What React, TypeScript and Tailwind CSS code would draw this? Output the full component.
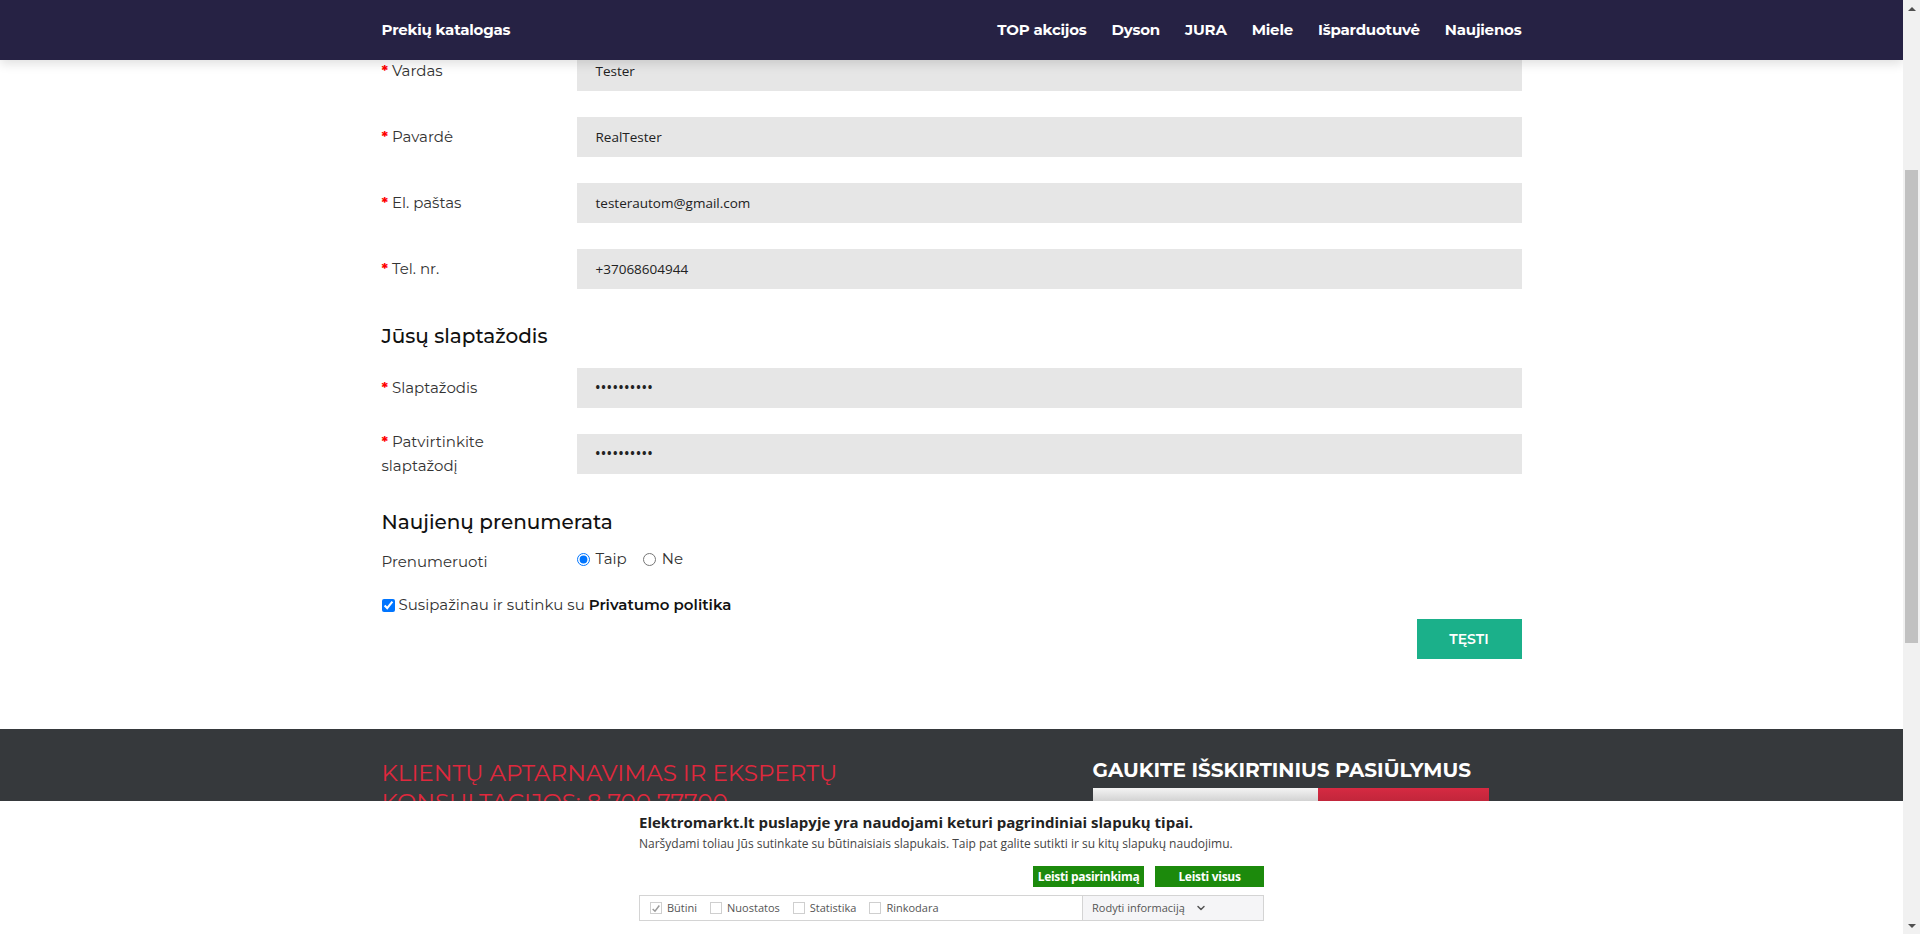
import { ChevronDown } from "lucide-react";

const personal = [
    { label: "Vardas", value: "Tester" },
    { label: "Pavardė", value: "RealTester" },
    { label: "El. paštas", value: "testerautom@gmail.com" },
    { label: "Tel. nr.", value: "+37068604944" },
];

const navLinks = ["TOP akcijos", "Dyson", "JURA", "Miele", "Išparduotuvė", "Naujienos"];

function Field({ label, value, password }: { label: React.ReactNode; value: string; password?: boolean }) {
    return (
        <div className="flex items-center h-[40px] mb-[26px]">
            <label className="w-[195px] shrink-0 text-[15px] leading-[24px] text-[#333]">
                <span className="text-[#f00] font-bold">*</span> {label}
            </label>
            <div className="flex-1 h-[40px] bg-[#e6e6e6] flex items-center pl-[19px] text-[13.5px] text-[#222] font-['Open_Sans',sans-serif]">
                {password ? (
                    <span className="text-[12px] font-bold tracking-[1.3px]">••••••••••</span>
                ) : (
                    value
                )}
            </div>
        </div>
    );
}

function CookieBox({ label, checked }: { label: string; checked?: boolean }) {
    return (
        <span className="flex items-center gap-[5px] mr-[13px]">
            <span className="w-[12px] h-[12px] border border-[#cfcfcf] bg-white flex items-center justify-center">
                {checked && (
                    <svg viewBox="0 0 12 12" className="w-[11px] h-[11px]">
                        <path d="M2 6.5 L4.8 9.2 L10 2.5" fill="none" stroke="#9a9a9a" strokeWidth="1.8" />
                    </svg>
                )}
            </span>
            <span>{label}</span>
        </span>
    );
}

export default function App() {
    return (
        <div className="flex h-screen overflow-hidden bg-white font-['Montserrat','Noto_Sans',sans-serif]">
            <div className="relative flex-1 overflow-hidden">
                {/* Sticky header */}
                <header className="absolute top-0 left-0 right-0 z-20 h-[60px] bg-[#262244] shadow-[0_4px_10px_rgba(0,0,0,0.12)]">
                    <div className="w-[1140px] mx-auto h-full flex items-center justify-between text-white font-bold text-[15px] tracking-[-0.2px]">
                        <span>Prekių katalogas</span>
                        <nav className="flex gap-[25px]">
                            {navLinks.map((l) => (
                                <span key={l}>{l}</span>
                            ))}
                        </nav>
                    </div>
                </header>

                {/* Registration form */}
                <main className="w-[1140px] mx-auto pt-[51px]">
                    {personal.map((f) => (
                        <Field key={f.label} label={f.label} value={f.value} />
                    ))}

                    <h3 className="mt-[35px] mb-[20px] text-[20px] leading-[24px] font-medium text-[#111]">Jūsų slaptažodis</h3>
                    <Field label="Slaptažodis" value="" password />
                    <Field
                        label={
                            <>
                                Patvirtinkite
                                <br />
                                slaptažodį
                            </>
                        }
                        value=""
                        password
                    />

                    <h3 className="mt-[36px] mb-[13px] text-[20px] leading-[24px] font-medium text-[#111]">Naujienų prenumerata</h3>
                    <div className="flex items-center h-[24px]">
                        <span className="w-[195px] text-[15px] text-[#333] pt-[6px]">Prenumeruoti</span>
                        <label className="flex items-center gap-[6px] text-[15px] text-[#333] mr-[16px]">
                            <input type="radio" name="sub" defaultChecked className="w-[13px] h-[13px] m-0 accent-[#0075ff]" />
                            Taip
                        </label>
                        <label className="flex items-center gap-[6px] text-[15px] text-[#333]">
                            <input type="radio" name="sub" className="w-[13px] h-[13px] m-0" />
                            Ne
                        </label>
                    </div>

                    <label className="flex items-center gap-[4px] mt-[22px] text-[15px] leading-[24px] text-[#333]">
                        <input type="checkbox" defaultChecked className="w-[13px] h-[13px] m-0 accent-[#0075ff]" />
                        Susipažinau ir sutinku su <b className="font-semibold text-[#111]">Privatumo politika</b>
                    </label>

                    <div className="flex justify-end mt-[2px]">
                        <button className="w-[105px] h-[40px] bg-[#1bb08a] text-white text-[14px] font-semibold">TĘSTI</button>
                    </div>
                </main>

                {/* Footer */}
                <footer className="mt-[70px] bg-[#36393c] h-[300px]">
                    <div className="w-[1140px] mx-auto pt-[30px] flex">
                        <div className="w-[711px] shrink-0">
                            <h2 className="text-[23px] leading-[29px] text-[#e0283d] uppercase">
                                Klientų aptarnavimas ir ekspertų
                                <br />
                                konsultacijos: 8 700 77700
                            </h2>
                        </div>
                        <div className="-mt-[2px]">
                            <h2 className="text-[20px] leading-[26px] font-bold text-white uppercase">Gaukite išskirtinius pasiūlymus</h2>
                            <div className="flex mt-[5px]">
                                <div className="w-[225px] h-[36px] bg-gradient-to-b from-[#f4f4f4] to-[#9a9a9a]" />
                                <div className="w-[171px] h-[36px] bg-gradient-to-b from-[#d62a42] to-[#9e1f2e]" />
                            </div>
                        </div>
                    </div>
                </footer>

                {/* Cookie consent */}
                <div className="absolute left-0 right-0 bottom-0 z-30 h-[133px] bg-white font-['Open_Sans',sans-serif]">
                    <div className="w-[625px] ml-[639px] pt-[11px]">
                        <p className="text-[15px] leading-[20px] font-bold text-[#222]">
                            Elektromarkt.lt puslapyje yra naudojami keturi pagrindiniai slapukų tipai.
                        </p>
                        <p className="mt-[3px] text-[12px] leading-[17px] text-[#444]">
                            Naršydami toliau Jūs sutinkate su būtinaisiais slapukais. Taip pat galite sutikti ir su kitų slapukų naudojimu.
                        </p>
                        <div className="flex justify-end gap-[11px] mt-[14px]">
                            <button className="w-[111px] h-[21px] bg-[#1c8a0c] text-white text-[12px] font-bold leading-[21px] tracking-[-0.3px]">
                                Leisti pasirinkimą
                            </button>
                            <button className="w-[109px] h-[21px] bg-[#1c8a0c] text-white text-[12px] font-bold leading-[21px] tracking-[-0.3px]">
                                Leisti visus
                            </button>
                        </div>
                        <div className="mt-[8px] h-[26px] border border-[#d4d4d4] flex text-[11px] text-[#555]">
                            <div className="flex-1 flex items-center pl-[10px]">
                                <CookieBox label="Būtini" checked />
                                <CookieBox label="Nuostatos" />
                                <CookieBox label="Statistika" />
                                <CookieBox label="Rinkodara" />
                            </div>
                            <div className="w-[181px] border-l border-[#d4d4d4] bg-[#f5f5f7] flex items-center pl-[9px] gap-[10px]">
                                Rodyti informaciją
                                <ChevronDown className="w-[12px] h-[12px]" strokeWidth={3} />
                            </div>
                        </div>
                    </div>
                </div>
            </div>

            {/* Browser scrollbar */}
            <div className="w-[17px] shrink-0 bg-[#f1f1f1] flex flex-col items-center">
                <span className="h-[17px] flex items-center justify-center">
                    <svg viewBox="0 0 8 4" className="w-[8px] h-[4px]">
                        <path d="M0 4 L4 0 L8 4 Z" fill="#505050" />
                    </svg>
                </span>
                <div className="mt-[153px] w-[13px] h-[473px] bg-[#c1c1c1]" />
                <div className="flex-1" />
                <span className="h-[17px] flex items-center justify-center">
                    <svg viewBox="0 0 8 4" className="w-[8px] h-[4px]">
                        <path d="M0 0 L4 4 L8 0 Z" fill="#505050" />
                    </svg>
                </span>
            </div>
        </div>
    );
}
